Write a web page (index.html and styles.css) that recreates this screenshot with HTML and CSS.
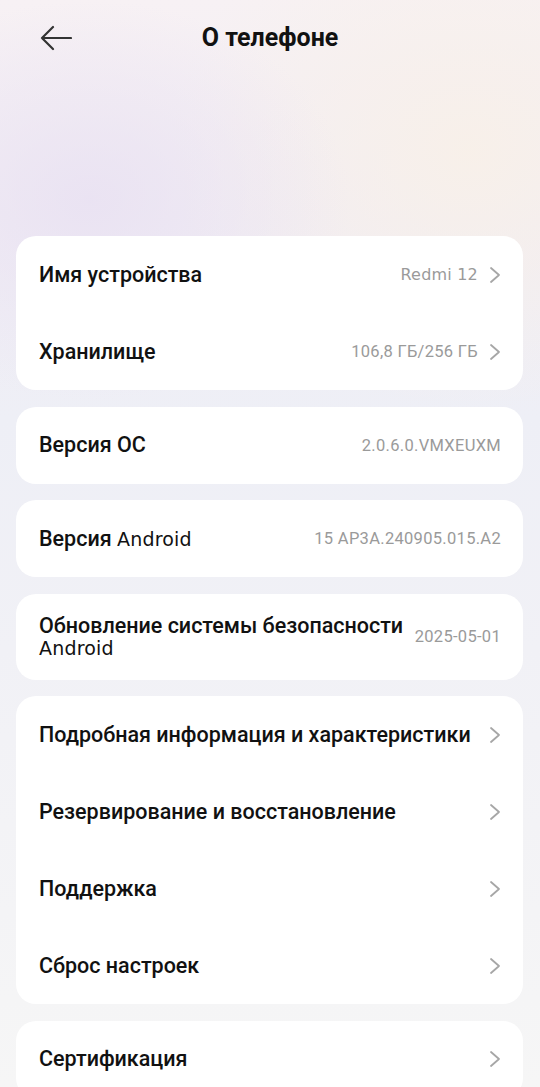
FILE: index.html
```html
<!DOCTYPE html>
<html lang="ru">
<head>
  <meta charset="UTF-8" />
  <meta name="viewport" content="width=device-width, initial-scale=1.0" />
  <title>О телефоне</title>
  <link rel="stylesheet" href="styles.css">
</head>
<body>
  <div class="header">
    <svg class="back" width="32" height="26" viewBox="0 0 32 26">
      <path d="M13 2 L2 13 L13 24 M2 13 H31" fill="none" stroke="#333" stroke-width="2.2" stroke-linecap="round" stroke-linejoin="round"/>
    </svg>
    <h1>О телефоне</h1>
  </div>

  <div class="cards">
    <div class="card">
      <div class="row">
        <span class="label">Имя устройства</span>
        <span class="value hand">Redmi 12</span>
        <svg class="chev" width="12" height="18" viewBox="0 0 12 18"><path d="M2 2 L10 9 L2 16"/></svg>
      </div>
      <div class="row">
        <span class="label">Хранилище</span>
        <span class="value">106,8 ГБ/256 ГБ</span>
        <svg class="chev" width="12" height="18" viewBox="0 0 12 18"><path d="M2 2 L10 9 L2 16"/></svg>
      </div>
    </div>

    <div class="card">
      <div class="row">
        <span class="label">Версия ОС</span>
        <span class="value">2.0.6.0.VMXEUXM</span>
      </div>
    </div>

    <div class="card">
      <div class="row">
        <span class="label">Версия <span class="hand">Android</span></span>
        <span class="value">15 AP3A.240905.015.A2</span>
      </div>
    </div>

    <div class="card">
      <div class="row tall">
        <div class="label">
          <div class="line">Обновление системы безопасности</div>
          <div class="hand">Android</div>
        </div>
        <span class="value">2025-05-01</span>
      </div>
    </div>

    <div class="card">
      <div class="row">
        <span class="label">Подробная информация и характеристики</span>
        <svg class="chev" width="12" height="18" viewBox="0 0 12 18"><path d="M2 2 L10 9 L2 16"/></svg>
      </div>
      <div class="row">
        <span class="label">Резервирование и восстановление</span>
        <svg class="chev" width="12" height="18" viewBox="0 0 12 18"><path d="M2 2 L10 9 L2 16"/></svg>
      </div>
      <div class="row">
        <span class="label">Поддержка</span>
        <svg class="chev" width="12" height="18" viewBox="0 0 12 18"><path d="M2 2 L10 9 L2 16"/></svg>
      </div>
      <div class="row">
        <span class="label">Сброс настроек</span>
        <svg class="chev" width="12" height="18" viewBox="0 0 12 18"><path d="M2 2 L10 9 L2 16"/></svg>
      </div>
    </div>

    <div class="card">
      <div class="row">
        <span class="label">Сертификация</span>
        <svg class="chev" width="12" height="18" viewBox="0 0 12 18"><path d="M2 2 L10 9 L2 16"/></svg>
      </div>
    </div>
  </div>
</body>
</html>
```

FILE: styles.css
```css
body {
  margin: 0;
  min-height: 1087px;
  font-family: Roboto, 'Noto Sans', sans-serif;
  color: #111;
  background:
    radial-gradient(ellipse 260px 200px at 90px 200px, rgba(232, 224, 242, 0.8), rgba(232, 224, 242, 0) 100%),
    radial-gradient(ellipse 300px 260px at 470px 150px, rgba(248, 240, 232, 0.9), rgba(248, 240, 232, 0) 100%),
    linear-gradient(180deg, #f7f1f4 0px, #f1edf4 220px, #eeeff6 420px, #f1f1f6 650px, #f6f6f6 1087px);
}
.header {
  height: 236px;
  box-sizing: border-box;
  padding: 0 40px;
  display: flex;
  align-items: flex-start;
}
.back {
  margin-top: 25px;
  flex-shrink: 0;
}
.header h1 {
  margin: 21px 0 0 0;
  flex: 1;
  text-align: center;
  padding-right: 32px;
  font-size: 25px;
  font-weight: 700;
  line-height: 34px;
}
.cards {
  padding: 0 17px 0 16px;
  display: flex;
  flex-direction: column;
  gap: 16.5px;
}
.card {
  background: #fff;
  border-radius: 20px;
}
.row {
  height: 77px;
  box-sizing: border-box;
  padding: 0 22px 0 23px;
  display: flex;
  align-items: center;
  gap: 12px;
}
.row.tall {
  height: 86px;
  gap: 8px;
}
.label {
  flex: 1;
  font-size: 21.5px;
  font-weight: 500;
  line-height: 22px;
}
.line {
  white-space: nowrap;
}
.value {
  font-size: 16.5px;
  color: #9a9a9a;
  white-space: nowrap;
  letter-spacing: 0.3px;
}
.hand {
  font-family: 'DejaVu Sans', sans-serif;
  font-size: 19px;
  line-height: 22px;
  letter-spacing: 0.2px;
}
.value.hand {
  font-size: 16px;
}
.chev {
  flex-shrink: 0;
  margin-left: -1px;
  margin-right: 0;
}
.chev path {
  fill: none;
  stroke: #a6a6a6;
  stroke-width: 1.8;
  stroke-linecap: round;
  stroke-linejoin: round;
}
```
